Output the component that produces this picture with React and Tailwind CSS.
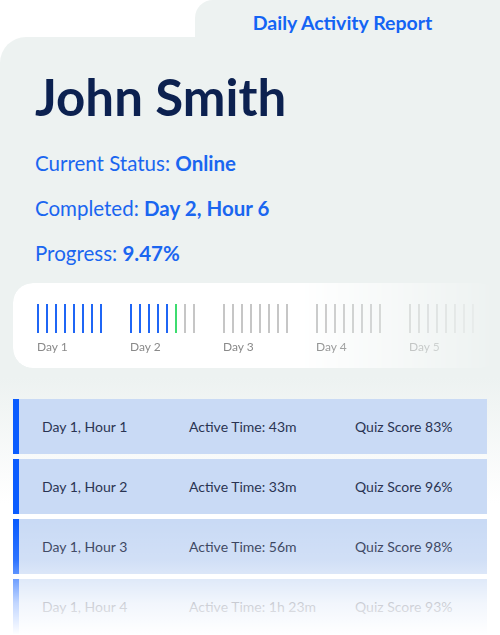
import React from "react";

const font = { fontFamily: "Lato, 'Noto Sans', sans-serif" };

function Bars({ blue, green, gray }) {
  const items = [];
  for (let i = 0; i < blue; i++) items.push("bg-[#1f66f5]");
  for (let i = 0; i < green; i++) items.push("bg-[#3ddc6f]");
  for (let i = 0; i < gray; i++) items.push("bg-[#c6c6c6]");
  return (
    <div className="flex gap-[7px] h-[29px]">
      {items.map((c, i) => (
        <div key={i} className={`w-[2px] h-full ${c}`} />
      ))}
    </div>
  );
}

const days = [
  { label: "Day 1", blue: 8, green: 0, gray: 0 },
  { label: "Day 2", blue: 5, green: 1, gray: 2 },
  { label: "Day 3", blue: 0, green: 0, gray: 8 },
  { label: "Day 4", blue: 0, green: 0, gray: 8 },
  { label: "Day 5", blue: 0, green: 0, gray: 8 },
];

const rows = [
  ["Day 1, Hour 1", "Active Time: 43m", "Quiz Score 83%"],
  ["Day 1, Hour 2", "Active Time: 33m", "Quiz Score 96%"],
  ["Day 1, Hour 3", "Active Time: 56m", "Quiz Score 98%"],
  ["Day 1, Hour 4", "Active Time: 1h 23m", "Quiz Score 93%"],
];

export default function App() {
  return (
    <div className="relative w-[500px] h-[635px] overflow-hidden bg-white" style={font}>
      <div className="flex justify-end">
        <div className="w-[305px] h-[37px] bg-[#edf2f1] rounded-tl-[18px] flex justify-center pr-[10px]">
          <span className="pt-[11px] text-[19.5px] leading-[24px] font-bold text-[#1464f4]">
            Daily Activity Report
          </span>
        </div>
      </div>
      <div className="h-[598px] rounded-tl-[26px] bg-[linear-gradient(to_bottom,#edf2f1_0%,#edf2f1_57%,#ffffff_78%)] flex flex-col">
        <div className="pl-[35px] pt-[30px]">
          <h1 className="text-[51px] leading-[60px] font-bold text-[#0c2150]">John Smith</h1>
          <div className="mt-[14px] text-[20.5px] leading-[45px] text-[#1a66f0]">
            <p>
              Current Status: <span className="font-bold">Online</span>
            </p>
            <p>
              Completed: <span className="font-bold">Day 2, Hour 6</span>
            </p>
            <p>
              Progress: <span className="font-bold">9.47%</span>
            </p>
          </div>
        </div>

        <div className="mt-[7px] ml-[13px] h-[85px] rounded-[20px] bg-white pl-[24px] pt-[21px] flex gap-[28px] [mask-image:linear-gradient(to_right,black_58%,transparent_100%)]">
          {days.map((d) => (
            <div key={d.label} className="flex flex-col">
              <Bars blue={d.blue} green={d.green} gray={d.gray} />
              <span className="mt-[6px] text-[12px] leading-[16px] text-[#8a8a8a]">{d.label}</span>
            </div>
          ))}
        </div>

        <div className="mt-[31px] mx-[13px] flex flex-col gap-[5px]">
          {rows.map((r) => (
            <div
              key={r[0]}
              className="h-[55px] bg-[#c9daf5] border-l-[6px] border-[#0a5cff] pl-[23px] grid grid-cols-[147px_166px_1fr] items-center text-[14px] text-[#2a3452]"
            >
              <span>{r[0]}</span>
              <span>{r[1]}</span>
              <span>{r[2]}</span>
            </div>
          ))}
        </div>
      </div>
      <div className="pointer-events-none absolute inset-x-0 bottom-0 h-[115px] bg-[linear-gradient(to_bottom,rgba(255,255,255,0)_0%,rgba(255,255,255,0.15)_35%,rgba(255,255,255,0.75)_72%,#ffffff_100%)]" />
    </div>
  );
}
